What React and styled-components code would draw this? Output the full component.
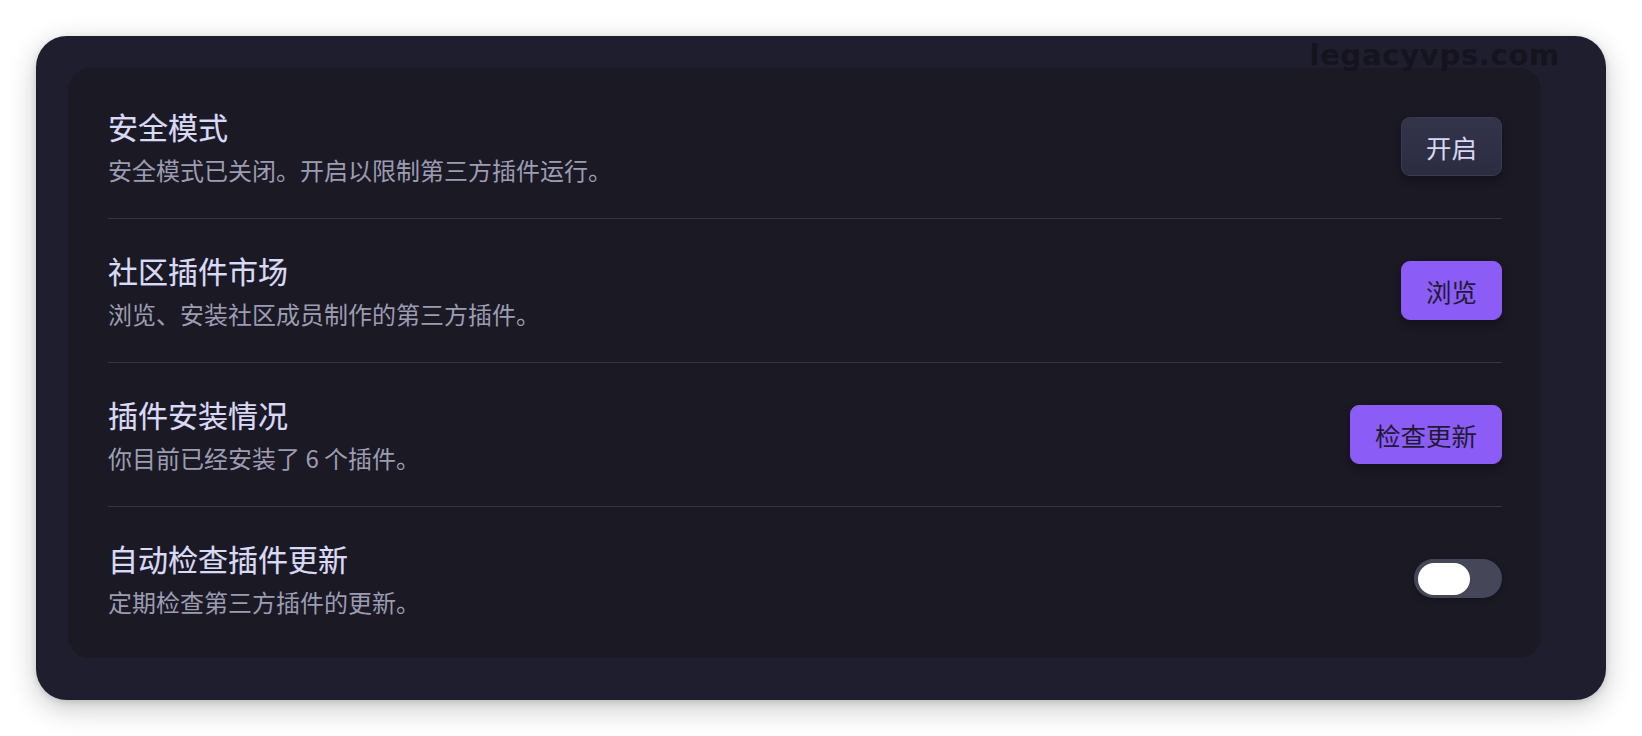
import React, { useState } from "react";
import styled, { createGlobalStyle } from "styled-components";

const GlobalStyle = createGlobalStyle`
  html, body {
    margin: 0;
    padding: 0;
    background: #ffffff;
  }
  body {
    font-family: "Noto Sans CJK SC", "Noto Sans", "Liberation Sans", sans-serif;
    -webkit-font-smoothing: antialiased;
  }
`;

const Page = styled.div`
  padding: 36px;
  box-sizing: border-box;
  width: 1642px;
  height: 736px;
`;

const Shell = styled.section`
  position: relative;
  height: 100%;
  box-sizing: border-box;
  background: #1f1e2e;
  border-radius: 31px;
  padding: 32px 65px 42px 32px;
  box-shadow: 0 8px 28px rgba(0, 0, 0, 0.22), 0 2px 6px rgba(0, 0, 0, 0.12);
`;

const Watermark = styled.span`
  position: absolute;
  top: 2px;
  right: 46px;
  font-family: "DejaVu Sans", "Liberation Sans", sans-serif;
  font-weight: 700;
  font-size: 29px;
  letter-spacing: 0.7px;
  color: #14131d;
  opacity: 0.9;
  pointer-events: none;
`;

const Panel = styled.div`
  height: 100%;
  box-sizing: border-box;
  background: #1a1924;
  border-radius: 22px;
  padding: 7px 39px 7px 40px;
  display: flex;
  flex-direction: column;
`;

const Row = styled.div`
  display: flex;
  align-items: center;
  justify-content: space-between;
  padding: 30px 0;
  border-bottom: ${(p) => (p.$last ? "none" : "1px solid #35343f")};
`;

const Text = styled.div`
  display: flex;
  flex-direction: column;
  gap: 4px;
`;

const Title = styled.div`
  font-size: 30px;
  line-height: 42px;
  color: #d9daf6;
  font-weight: 400;
  -webkit-text-stroke: 0.2px #d9daf6;
`;

const Desc = styled.div`
  font-size: 24px;
  line-height: 37px;
  color: #9c9cb2;
`;

const Button = styled.button`
  height: 59px;
  padding: 0 24px;
  border-radius: 9px;
  font-family: inherit;
  font-size: 25.5px;
  cursor: pointer;
  box-shadow: 0 4px 10px rgba(0, 0, 0, 0.28);
  border: 1px solid ${(p) => (p.$primary ? "#8b5cf6" : "#3b3b50")};
  background: ${(p) =>
    p.$primary ? "#8b5cf6" : "linear-gradient(180deg, #33334a 0%, #2c2c41 100%)"};
  color: ${(p) => (p.$primary ? "#1f1a33" : "#d7d8f5")};
`;

const Track = styled.button`
  width: 88px;
  height: 39px;
  border: none;
  padding: 0 4px;
  border-radius: 20px;
  background: #454759;
  display: flex;
  align-items: center;
  justify-content: ${(p) => (p.$on ? "flex-end" : "flex-start")};
  cursor: pointer;
  box-shadow: 0 2px 6px rgba(0, 0, 0, 0.25);
`;

const Knob = styled.span`
  width: 52px;
  height: 32px;
  border-radius: 16px;
  background: #ffffff;
`;

const Toggle = () => {
  const [on, setOn] = useState(false);
  return (
    <Track $on={on} onClick={() => setOn(!on)} aria-pressed={on}>
      <Knob />
    </Track>
  );
};

const settings = [
  {
    title: "安全模式",
    desc: "安全模式已关闭。开启以限制第三方插件运行。",
    action: <Button>开启</Button>,
  },
  {
    title: "社区插件市场",
    desc: "浏览、安装社区成员制作的第三方插件。",
    action: <Button $primary>浏览</Button>,
  },
  {
    title: "插件安装情况",
    desc: "你目前已经安装了 6 个插件。",
    action: <Button $primary>检查更新</Button>,
  },
  {
    title: "自动检查插件更新",
    desc: "定期检查第三方插件的更新。",
    action: <Toggle />,
  },
];

export default function App() {
  return (
    <>
      <GlobalStyle />
      <Page>
        <Shell>
          <Watermark>legacyvps.com</Watermark>
          <Panel>
            {settings.map((s, i) => (
              <Row key={s.title} $last={i === settings.length - 1}>
                <Text>
                  <Title>{s.title}</Title>
                  <Desc>{s.desc}</Desc>
                </Text>
                {s.action}
              </Row>
            ))}
          </Panel>
        </Shell>
      </Page>
    </>
  );
}
